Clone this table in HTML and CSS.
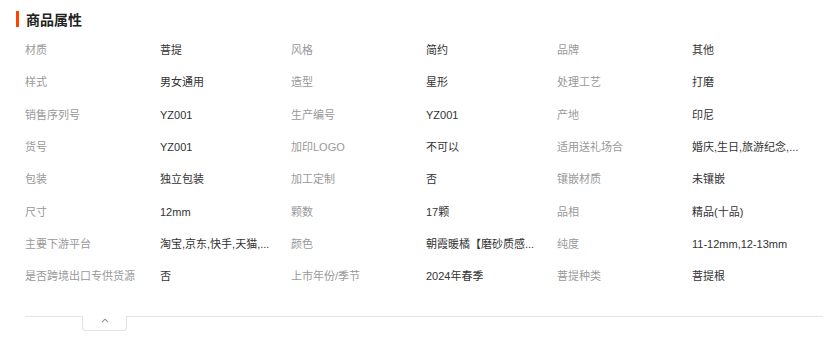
FILE: index.html
```html
<!DOCTYPE html>
<html lang="zh-CN">
<head>
<meta charset="utf-8">
<title>商品属性</title>
<link rel="stylesheet" href="styles.css">
</head>
<body>
<section class="panel">
  <h2 class="title">商品属性</h2>
  <div class="grid">
    <div class="item"><span class="label">材质</span><span class="value">菩提</span></div>
    <div class="item"><span class="label">风格</span><span class="value">简约</span></div>
    <div class="item"><span class="label">品牌</span><span class="value">其他</span></div>

    <div class="item"><span class="label">样式</span><span class="value">男女通用</span></div>
    <div class="item"><span class="label">造型</span><span class="value">星形</span></div>
    <div class="item"><span class="label">处理工艺</span><span class="value">打磨</span></div>

    <div class="item"><span class="label">销售序列号</span><span class="value">YZ001</span></div>
    <div class="item"><span class="label">生产编号</span><span class="value">YZ001</span></div>
    <div class="item"><span class="label">产地</span><span class="value">印尼</span></div>

    <div class="item"><span class="label">货号</span><span class="value">YZ001</span></div>
    <div class="item"><span class="label">加印LOGO</span><span class="value">不可以</span></div>
    <div class="item"><span class="label">适用送礼场合</span><span class="value">婚庆,生日,旅游纪念,...</span></div>

    <div class="item"><span class="label">包装</span><span class="value">独立包装</span></div>
    <div class="item"><span class="label">加工定制</span><span class="value">否</span></div>
    <div class="item"><span class="label">镶嵌材质</span><span class="value">未镶嵌</span></div>

    <div class="item"><span class="label">尺寸</span><span class="value">12mm</span></div>
    <div class="item"><span class="label">颗数</span><span class="value">17颗</span></div>
    <div class="item"><span class="label">品相</span><span class="value">精品(十品)</span></div>

    <div class="item"><span class="label">主要下游平台</span><span class="value">淘宝,京东,快手,天猫,...</span></div>
    <div class="item"><span class="label">颜色</span><span class="value">朝霞暖橘【磨砂质感...</span></div>
    <div class="item"><span class="label">纯度</span><span class="value">11-12mm,12-13mm</span></div>

    <div class="item"><span class="label">是否跨境出口专供货源</span><span class="value">否</span></div>
    <div class="item"><span class="label">上市年份/季节</span><span class="value">2024年春季</span></div>
    <div class="item"><span class="label">菩提种类</span><span class="value">菩提根</span></div>
  </div>
  <div class="footer">
    <span class="rule rule-left"></span>
    <button class="toggle" type="button" aria-label="收起">
      <svg width="8" height="5" viewBox="0 0 8 5"><path d="M1 4.2 L4 1.2 L7 4.2" fill="none" stroke="#8a8f99" stroke-width="1.1"/></svg>
    </button>
    <span class="rule rule-right"></span>
  </div>
</section>
</body>
</html>
```
FILE: styles.css
```css
* { box-sizing: border-box; }
html, body {
  margin: 0;
  padding: 0;
  background: #fff;
}
body {
  font-family: "Liberation Sans", "Noto Sans CJK SC", sans-serif;
  color: #333;
}
.panel {
  width: 833px;
  padding-top: 11px;
}
.title {
  margin: 0 0 0 16px;
  padding-left: 7px;
  border-left: 3px solid #ff4400;
  font-size: 14px;
  font-weight: bold;
  line-height: 16px;
  height: 16px;
  color: #222;
  display: flex;
  align-items: center;
  font-family: "Noto Sans CJK SC", sans-serif;
}
.grid {
  margin: 7px 0 0 25px;
  width: 798px;
  display: grid;
  grid-template-columns: repeat(3, 266px);
  grid-auto-rows: 32.3px;
}
.item {
  display: flex;
  align-items: center;
  font-size: 11px;
  line-height: 16px;
  white-space: nowrap;
}
.label {
  width: 135px;
  flex: none;
  color: #999;
}
.value {
  color: #333;
  max-width: 120px;
  overflow: hidden;
  text-overflow: ellipsis;
}
.footer {
  display: flex;
  margin: 24px 0 0 25px;
  width: 798px;
  align-items: flex-start;
}
.rule {
  border-top: 1px solid #e3e3e3;
  height: 1px;
}
.rule-left { width: 57px; }
.rule-right { flex: 1; }
.toggle {
  width: 45px;
  height: 15px;
  margin: 0;
  padding: 2px 0 0;
  border: 1px solid #e3e3e3;
  border-top: none;
  border-radius: 0 0 4px 4px;
  background: #fff;
  display: flex;
  justify-content: center;
  align-items: flex-start;
}
.toggle svg { display: block; }
```
